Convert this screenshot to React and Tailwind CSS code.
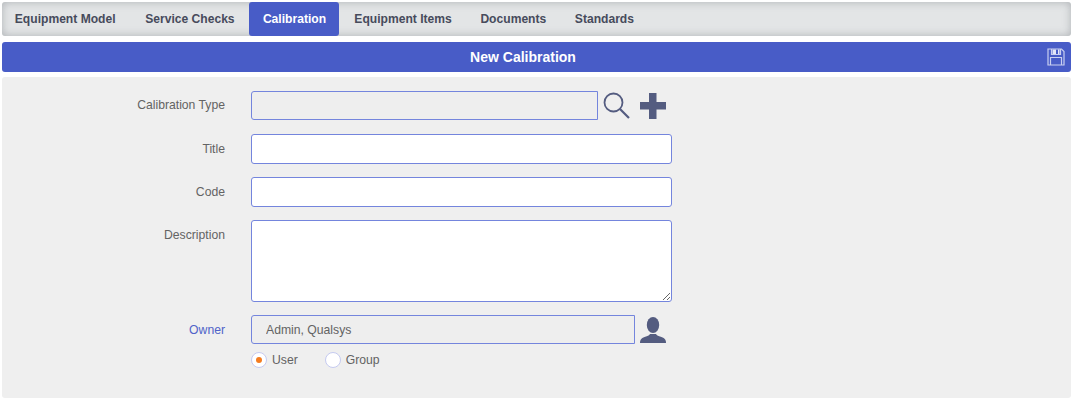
const tabs = ['Equipment Model', 'Service Checks', 'Calibration', 'Equipment Items', 'Documents', 'Standards']

const inputClass = 'ml-[26px] block h-[30px] w-[421px] rounded-[3px] border border-[#7485dd] bg-white outline-none'
const labelClass = 'w-[223px] shrink-0 text-right text-[12.2px] leading-[14px] text-[#636363]'

function FloppyIcon() {
  return (
    <svg width="18" height="18" viewBox="0 0 18 18" fill="none" stroke="#c9cff0" strokeWidth="1.2">
      <path d="M1 1h13.500L17 3.500V17H1z" />
      <path d="M4.500 1v5.500h9V1" />
      <path d="M5.500 1.500h3.500v4.500h-3.500zM11 1.500h1.500v4.500H11z" fill="#e4e7f8" stroke="none" />
      <path d="M3.500 17V9.500h11V17" />
    </svg>
  )
}

function SearchIcon() {
  return (
    <svg width="28" height="28" viewBox="0 0 28 28" fill="none" stroke="#545c80" className="shrink-0">
      <circle cx="10.500" cy="10.500" r="9" strokeWidth="1.800" />
      <path d="M17 17l9 9" strokeWidth="2.200" />
    </svg>
  )
}

function PlusIcon() {
  return (
    <svg width="28" height="28" viewBox="0 0 28 28" fill="#545c80" className="shrink-0">
      <path d="M10 1h7.500v9H27v7.500h-9.500V27H10v-9.500H1V10h9z" />
    </svg>
  )
}

function UserIcon() {
  return (
    <svg width="28" height="28" viewBox="0 0 28 28" fill="#545c80" className="shrink-0">
      <ellipse cx="14" cy="9" rx="6.200" ry="8" />
      <path d="M1 27c0-4 2-5.500 6-6.500 2-.5 3.500-1.200 4-2.500h6c.5 1.300 2 2 4 2.500 4 1 6 2.500 6 6.500z" />
    </svg>
  )
}

function Radio({ label, checked }) {
  return (
    <label className="flex items-center gap-[5px] text-[12.2px] text-[#636363]">
      <span className="flex h-[16px] w-[16px] items-center justify-center rounded-full border border-[#c5caf0] bg-white">
        {checked && <span className="h-[6px] w-[6px] rounded-full bg-[#f57c1f]" />}
      </span>
      {label}
    </label>
  )
}

export default function App() {
  return (
    <div className="h-[400px] w-[1073px] bg-white px-[2px] pt-[2px] font-['Liberation_Sans',Arial,sans-serif]">
      {/* Tabs */}
      <div className="flex h-[34px] w-[1069px] gap-[1px] rounded-[3px] bg-[#e3e5e6] shadow-[inset_0_0_8px_rgba(130,135,140,0.55)]">
        {tabs.map((tab, i) => (
          <div
            key={tab}
            className={
              tab === 'Calibration'
                ? 'mr-[1px] flex items-center rounded-[3px] bg-[#485cc7] pl-[13.500px] pr-[12.500px] text-[12.100px] font-bold text-white'
                : `flex items-center px-[13.800px] text-[12.100px] font-bold text-[#474b5c] ${i === 0 ? '-ml-[1px] pr-[14.800px]' : ''}`
            }
          >
            {tab}
          </div>
        ))}
      </div>

      {/* Title bar */}
      <div className="relative mt-[6px] flex h-[30px] w-[1069px] items-center justify-center rounded-[3px] bg-[#485cc7] pr-[27px] text-[14px] font-bold text-white">
        New Calibration
        <div className="absolute right-[6px] top-[6px]">
          <FloppyIcon />
        </div>
      </div>

      {/* Form */}
      <div className="mt-[5px] h-[321px] w-[1069px] rounded-[3px] bg-[#efefef] pt-[14px]">
        <div className="flex h-[29px] items-center">
          <div className={`${labelClass} -translate-y-px`}>Calibration Type</div>
          <input readOnly className="ml-[26px] h-[29px] w-[347px] rounded-l-[3px] border border-[#7485dd] bg-[#eeeeee] outline-none" />
          <div className="ml-[5px]">
            <SearchIcon />
          </div>
          <div className="ml-[8px]">
            <PlusIcon />
          </div>
        </div>

        <div className="mt-[14px] flex items-center">
          <div className={labelClass}>Title</div>
          <input className={inputClass} />
        </div>

        <div className="mt-[13px] flex items-center">
          <div className={labelClass}>Code</div>
          <input className={inputClass} />
        </div>

        <div className="mt-[13px] flex items-start">
          <div className={`${labelClass} pt-[8px]`}>Description</div>
          <textarea className="ml-[26px] block h-[82px] w-[421px] rounded-[3px] border border-[#7485dd] bg-white outline-none" />
        </div>

        <div className="mt-[13px] flex h-[29px] items-center">
          <div className={`${labelClass} !text-[#4f63c9]`}>Owner</div>
          <input
            readOnly
            value="Admin, Qualsys"
            className="ml-[26px] h-[29px] w-[384px] rounded-l-[3px] border border-[#7485dd] bg-[#eeeeee] pl-[14px] text-[12.2px] text-[#636363] outline-none"
          />
          <div className="ml-[4px]">
            <UserIcon />
          </div>
        </div>

        <div className="ml-[249px] mt-[7px] flex gap-[27px]">
          <Radio label="User" checked />
          <Radio label="Group" />
        </div>
      </div>
    </div>
  )
}
